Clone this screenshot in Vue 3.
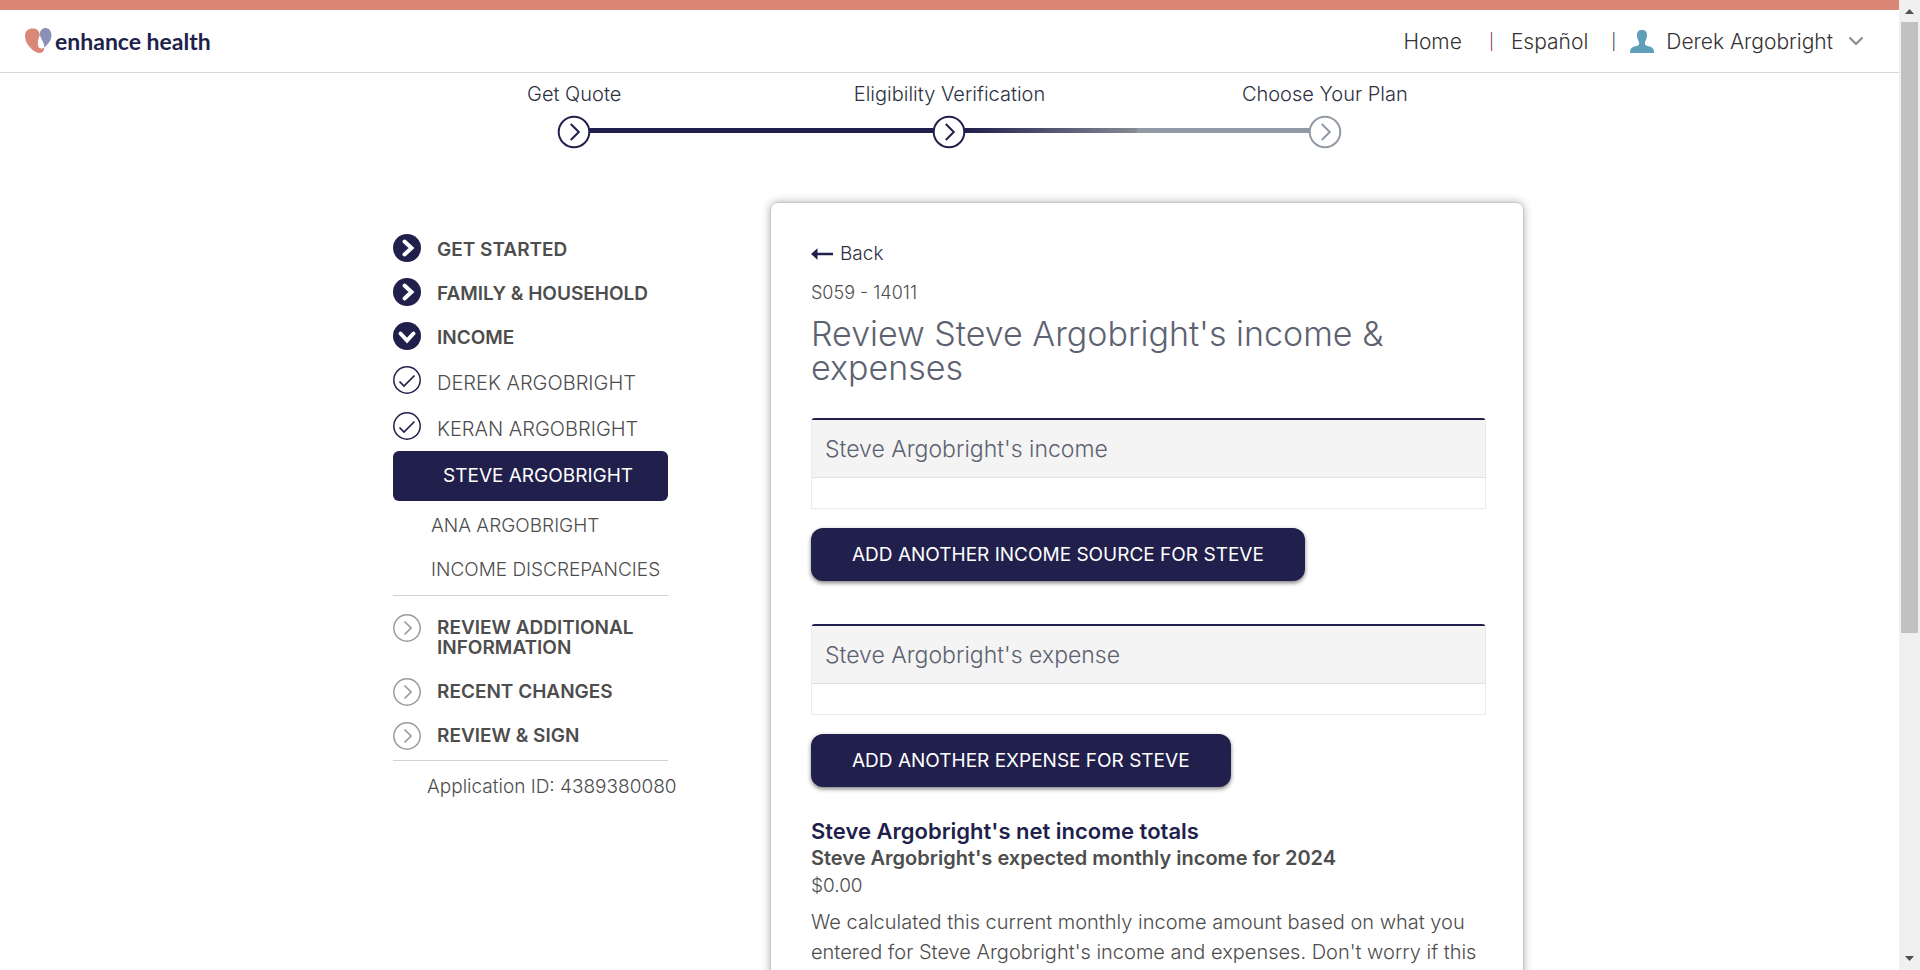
<script setup>
const steps = [
  { label: 'Get Quote', state: 'done' },
  { label: 'Eligibility Verification', state: 'current' },
  { label: 'Choose Your Plan', state: 'todo' },
]

const sections = [
  { label: 'GET STARTED', icon: 'right' },
  { label: 'FAMILY & HOUSEHOLD', icon: 'right' },
  { label: 'INCOME', icon: 'down' },
]

const finished = ['DEREK ARGOBRIGHT', 'KERAN ARGOBRIGHT']
const upcoming = ['ANA ARGOBRIGHT', 'INCOME DISCREPANCIES']
const pending = ['REVIEW ADDITIONAL INFORMATION', 'RECENT CHANGES', 'REVIEW & SIGN']

const groups = [
  { title: "Steve Argobright's income", action: 'ADD ANOTHER INCOME SOURCE FOR STEVE' },
  { title: "Steve Argobright's expense", action: 'ADD ANOTHER EXPENSE FOR STEVE' },
]
</script>

<template>
  <div class="shell">
    <div class="page">
      <header class="topbar">
        <a class="brand" href="#">
          <svg width="27" height="26" viewBox="0 0 27 26" aria-hidden="true">
            <path fill="#da8777" d="M0 8C0 3 3 .5 8 .5C12 .5 14.500 3 14.800 7C14 10 12.800 12 12.800 15.500C12.800 18.500 14 20.500 16 20.500C17.500 20.500 18.300 20 19.200 19.500C19.200 23 17.500 25 14.500 25C10 25 0 17.500 0 8Z" />
            <path fill="#8b90b6" d="M14.800 6C15 2.500 17.500 0 20.500 0C24 0 26.500 3 26.500 7.500C26.500 12 23 16.500 19.300 19.500C19.300 13 15.500 11.500 14.800 6Z" />
          </svg>
          <span>enhance health</span>
        </a>
        <nav class="links" aria-label="Account">
          <a href="#">Home</a>
          <span class="bar first" aria-hidden="true">|</span>
          <a href="#">Español</a>
          <span class="bar second" aria-hidden="true">|</span>
          <button class="user" type="button">
            <svg width="24" height="23" viewBox="0 0 24 23" aria-hidden="true">
              <path fill="#5f9fb9" d="M12 0C15.500 0 17.300 2 17 5.500C16.800 9 15.800 10.500 15 12V14.500C16 16 19 16.200 21.500 17.300C23.500 18.300 24 20 24 23H0C0 20 .5 18.300 2.500 17.300C5 16.200 8 16 9 14.500V12C8.200 10.500 7.200 9 7 5.500C6.700 2 8.500 0 12 0Z" />
            </svg>
            <span>Derek Argobright</span>
            <svg width="16" height="10" viewBox="0 0 16 10" aria-hidden="true">
              <path d="M1.500 1.500L8 8L14.500 1.500" fill="none" stroke="#8c8c8c" stroke-width="2.200" />
            </svg>
          </button>
        </nav>
      </header>

      <ol class="stepper">
        <li v-for="s in steps" :key="s.label" :class="s.state">
          <span>{{ s.label }}</span>
          <svg width="34" height="34" viewBox="0 0 34 34" aria-hidden="true">
            <circle cx="17" cy="17" r="15.300" fill="#fff" stroke="currentColor" stroke-width="2" />
            <path d="M13.800 9L21.800 17L13.800 25" fill="none" stroke="currentColor" stroke-width="2" />
          </svg>
        </li>
      </ol>

      <div class="columns">
        <nav class="side" aria-label="Application sections">
          <a v-for="s in sections" :key="s.label" class="row strong" href="#">
            <svg width="28" height="28" viewBox="0 0 28 28" aria-hidden="true">
              <circle cx="14" cy="14" r="14" fill="#211f4c" />
              <path :d="s.icon === 'right' ? 'M11.500 7.500L18.500 14L11.500 20.500' : 'M7.500 11.500L14 18.500L20.500 11.500'" fill="none" stroke="#fff" stroke-width="4" stroke-linecap="round" stroke-linejoin="miter" />
            </svg>
            <span>{{ s.label }}</span>
          </a>
          <a v-for="name in finished" :key="name" class="row person" href="#">
            <svg width="28" height="28" viewBox="0 0 28 28" aria-hidden="true">
              <circle cx="14" cy="14" r="13.200" fill="none" stroke="#211f4c" stroke-width="1.500" />
              <path d="M6.500 15.500L11 20L21.500 9.500" fill="none" stroke="#211f4c" stroke-width="1.700" />
            </svg>
            <span>{{ name }}</span>
          </a>
          <a class="active" href="#" aria-current="page">STEVE ARGOBRIGHT</a>
          <div class="rest">
            <a v-for="name in upcoming" :key="name" href="#">{{ name }}</a>
          </div>
          <div class="pending">
            <a v-for="name in pending" :key="name" class="row strong" href="#">
              <svg width="28" height="28" viewBox="0 0 28 28" aria-hidden="true">
                <circle cx="14" cy="14" r="13.200" fill="none" stroke="#9a9a9a" stroke-width="1.500" />
                <path d="M11.500 7.500L18 14L11.500 20.500" fill="none" stroke="#9a9a9a" stroke-width="1.700" />
              </svg>
              <span>{{ name }}</span>
            </a>
          </div>
          <p class="appid">Application ID: 4389380080</p>
        </nav>

        <main class="card">
          <a class="back" href="#">
            <svg width="22" height="12" viewBox="0 0 22 12" aria-hidden="true">
              <path fill="#211f4c" d="M0 6L6.500 .2V4.700H22V7.300H6.500V11.800Z" />
            </svg>
            <span>Back</span>
          </a>
          <p class="code">S059 - 14011</p>
          <h1>Review Steve Argobright's income &amp;<br />expenses</h1>
          <section v-for="g in groups" :key="g.title" class="group">
            <table>
              <thead>
                <tr><th scope="col">{{ g.title }}</th></tr>
              </thead>
              <tbody>
                <tr><td></td></tr>
              </tbody>
            </table>
            <button type="button">{{ g.action }}</button>
          </section>
          <h2>Steve Argobright's net income totals</h2>
          <h3>Steve Argobright's expected monthly income for 2024</h3>
          <p class="amount">$0.00</p>
          <p class="note">We calculated this current monthly income amount based on what you<br />entered for Steve Argobright's income and expenses. Don't worry if this</p>
        </main>
      </div>
    </div>

    <div class="scrollbar" aria-hidden="true">
      <svg width="9" height="5" viewBox="0 0 9 5"><path fill="#505050" d="M4.500 0L9 5H0Z" /></svg>
      <div class="track"><div class="thumb"></div></div>
      <svg width="9" height="5" viewBox="0 0 9 5"><path fill="#505050" d="M0 0H9L4.500 5Z" /></svg>
    </div>
  </div>
</template>

<style>
body {
  margin: 0;
  background: #fff;
}
</style>

<style scoped>
.shell {
  display: grid;
  grid-template-columns: minmax(0, 1fr) 21px;
  height: 100vh;
  overflow: hidden;
  font-family: Inter, "Open Sans", sans-serif;
  font-size: 19px;
  font-weight: 300;
  color: #4d4d4d;
}
.shell *,
.shell {
  box-sizing: border-box;
}
a {
  color: inherit;
  text-decoration: none;
}
button {
  font: inherit;
  cursor: pointer;
}
svg {
  display: block;
  flex: none;
}
p, h1, h2, h3, ol {
  margin: 0;
  padding: 0;
}
.page {
  overflow: hidden;
  border-top: 10px solid #da8777;
}

.topbar {
  display: flex;
  align-items: center;
  justify-content: space-between;
  height: 63px;
  padding: 0 35px 0 25px;
  border-bottom: 1px solid #d8d8d8;
}
.brand {
  display: flex;
  align-items: center;
  gap: 3px;
  font-family: Lato, sans-serif;
  font-size: 23px;
  line-height: 24px;
  font-weight: 700;
  color: #211f4c;
}
.links {
  display: flex;
  align-items: center;
  font-size: 21px;
  color: #333;
}
.bar {
  font-size: 16px;
}
.bar.first {
  margin: 0 17px 0 27px;
  color: #8c2a5c;
}
.bar.second {
  margin: 0 14px 0 23px;
  color: #333;
}
.user {
  display: flex;
  align-items: center;
  padding: 0;
  border: 0;
  background: none;
  color: inherit;
}
.user span {
  margin: 0 15px 0 12px;
}

.stepper {
  display: grid;
  grid-template-columns: repeat(3, 1fr);
  max-width: 1126px;
  margin: 0 auto;
  padding-top: 10px;
  list-style: none;
}
.stepper li {
  position: relative;
  display: flex;
  flex-direction: column;
  align-items: center;
  gap: 10px;
  font-size: 20px;
  line-height: 22px;
  color: #211f4c;
}
.stepper span {
  color: #2d3142;
}
.stepper .todo svg {
  color: #9199a5;
}
.stepper svg {
  position: relative;
}
.stepper li:not(:last-child)::after {
  content: "";
  position: absolute;
  left: calc(50% + 16px);
  bottom: 16px;
  width: calc(100% - 32px);
  height: 5px;
  background: #211f4c;
}
.stepper .current::after {
  background: linear-gradient(to right, #211f4c, #858a94 50%, #9199a5 50%) !important;
}

.columns {
  display: grid;
  grid-template-columns: 275px minmax(0, 1fr);
  gap: 102px;
  max-width: 1149px;
  margin: 0 auto;
  padding: 53px 0 0 18px;
}
.side {
  padding-top: 32px;
}
.row {
  display: flex;
  align-items: flex-start;
  gap: 16px;
  min-height: 44px;
  line-height: 20px;
}
.row span {
  padding-top: 6px;
}
.strong {
  font-weight: 600;
}
.person {
  height: 46px;
  font-size: 20px;
}
.person span {
  padding-top: 7px;
}
.person + .active {
  margin-top: -7px;
}
.active {
  display: block;
  padding: 15px 0 15px 50px;
  border-radius: 6px;
  background: #211f4c;
  color: #fff;
  line-height: 20px;
  font-weight: 400;
}
.rest {
  display: grid;
  gap: 24px;
  padding: 15px 0 15px 38px;
  border-bottom: 1px solid #d2d2d2;
  line-height: 20px;
  white-space: nowrap;
}
.pending {
  padding-top: 18px;
  border-bottom: 1px solid #d2d2d2;
}
.pending .row span {
  padding-top: 4px;
}
.pending .row:first-child {
  padding-bottom: 20px;
}
.pending .row:last-child {
  min-height: 38px;
}
.appid {
  padding: 16px 0 0 34px;
  line-height: 20px;
  white-space: nowrap;
}

.card {
  min-height: 900px;
  padding: 39px 37px 40px 40px;
  border: 1px solid #c8c8c8;
  border-radius: 8px;
  box-shadow: 0 0 8px rgba(0, 0, 0, 0.3);
}
.back {
  display: flex;
  align-items: center;
  gap: 7px;
  line-height: 24px;
  color: #2d3142;
}
.code {
  padding-top: 15px;
  font-size: 18px;
  line-height: 24px;
}
h1 {
  margin: 12px 0 33px;
  font-size: 34px;
  line-height: 34px;
  font-weight: 300;
  color: #5c6270;
}
table {
  width: 100%;
  border: 1px solid #e6ebeb;
  border-top: 2px solid #211f4c;
  border-radius: 4px 4px 0 0;
  border-spacing: 0;
}
th {
  height: 58px;
  padding: 0 13px;
  border-bottom: 1px solid #e0e0e0;
  background: #f4f4f4;
  font-size: 23px;
  font-weight: 300;
  text-align: left;
  color: #5c6270;
}
td {
  height: 30px;
  padding: 0;
}
.group button {
  margin: 19px 0 43px;
  padding: 17px 41px 16px;
  border: 0;
  border-radius: 12px;
  background: #211f4c;
  box-shadow: 0 2px 4px rgba(0, 0, 0, 0.5);
  color: #fff;
  line-height: 20px;
  font-weight: 400;
}
.group + h2 {
  margin-top: -12px;
}
h2 {
  font-size: 22px;
  line-height: 27px;
  font-weight: 600;
  color: #211f4c;
}
h3 {
  font-size: 20px;
  line-height: 27px;
  font-weight: 600;
}
.amount {
  line-height: 27px;
}
.note {
  padding-top: 8px;
  font-size: 20px;
  line-height: 30px;
  white-space: nowrap;
}

.scrollbar {
  display: flex;
  flex-direction: column;
  align-items: center;
  justify-content: space-between;
  padding: 9px 0;
  background: #f0f0f0;
}
.track {
  flex: 1;
  width: 17px;
  margin: 8px 0;
}
.thumb {
  height: 66%;
  background: #c1c1c1;
}
</style>
